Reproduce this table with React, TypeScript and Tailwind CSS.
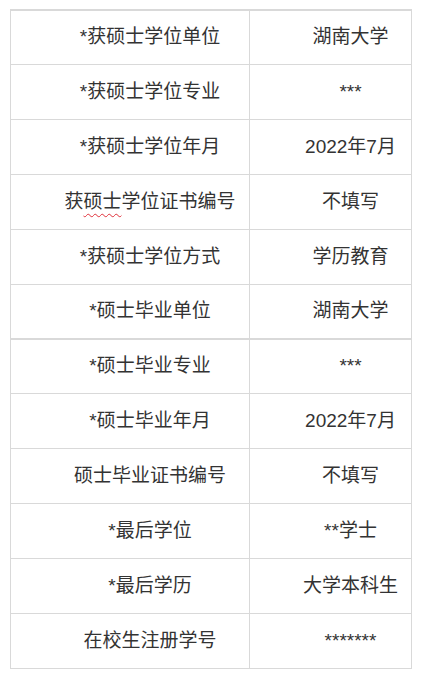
import React from "react";

const rows: [React.ReactNode, string][] = [
  ["*获硕士学位单位", "湖南大学"],
  ["*获硕士学位专业", "***"],
  ["*获硕士学位年月", "2022年7月"],
  [
    <>
      获<span className="underline decoration-wavy decoration-[#e0303a] decoration-1 underline-offset-[5px]">硕士</span>学位证书编号
    </>,
    "不填写",
  ],
  ["*获硕士学位方式", "学历教育"],
  ["*硕士毕业单位", "湖南大学"],
  ["*硕士毕业专业", "***"],
  ["*硕士毕业年月", "2022年7月"],
  ["硕士毕业证书编号", "不填写"],
  ["*最后学位", "**学士"],
  ["*最后学历", "大学本科生"],
  ["在校生注册学号", "*******"],
];

function rowClass(i: number) {
  if (i === 0 || i === 6) return "h-[54px] border-b";
  if (i === 5) return "h-[55px] border-b-2";
  return "h-[55px] border-b";
}

export default function App() {
  return (
    <div className="bg-white min-h-[682px] pt-[9px] pl-[10px]" style={{ fontFamily: '"Liberation Sans", "Noto Sans CJK SC", sans-serif' }}>
      <div className="w-[402px] border-t-2 border-l border-r border-[#d9d9d9] text-[19px] text-[#333333]">
        {rows.map(([l, r], i) => (
          <div key={i} className={`flex ${rowClass(i)} border-[#d9d9d9]`}>
            <div className="w-[239px] border-r border-[#d9d9d9] flex items-center justify-center pl-[40px] whitespace-nowrap">
              <span>{l}</span>
            </div>
            <div className="flex-1 flex items-center justify-center pl-[40px] whitespace-nowrap">
              <span>{r}</span>
            </div>
          </div>
        ))}
      </div>
    </div>
  );
}
